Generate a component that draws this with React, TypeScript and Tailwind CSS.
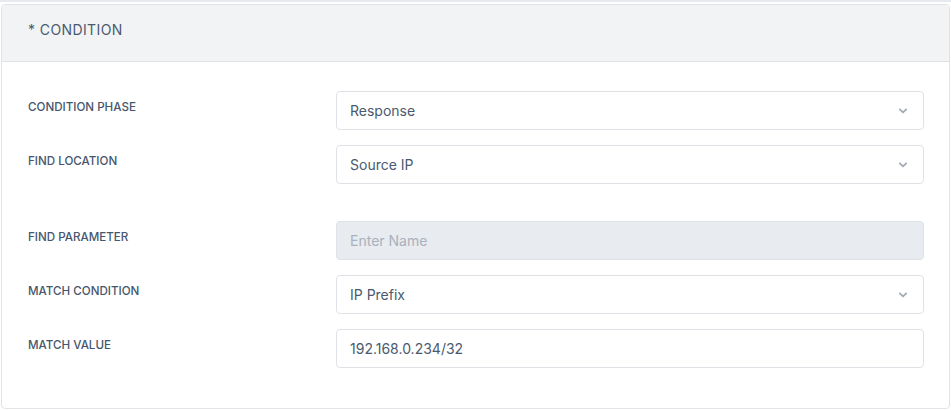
const font = { fontFamily: "Inter, 'Noto Sans', sans-serif" };

function Chevron() {
  return (
    <svg width="10" height="6" viewBox="0 0 10 6" className="shrink-0">
      <path d="M1.8 1.4 L5 4.4 L8.2 1.4" fill="none" stroke="#a3aab2" strokeWidth="1.8" strokeLinecap="round" strokeLinejoin="round" />
    </svg>
  );
}

function Row({
  label,
  children,
  className = "",
}: {
  label: string;
  children: React.ReactNode;
  className?: string;
}) {
  return (
    <div className={"flex items-start " + className}>
      <div className="w-[308px] shrink-0 pt-[8px] text-[11.6px] leading-4 font-medium uppercase text-[#46566c]">
        {label}
      </div>
      {children}
    </div>
  );
}

function Select({ value }: { value: string }) {
  return (
    <div className="flex-1 h-[39px] flex items-center justify-between rounded-[4px] border border-[#dee2e7] bg-white pl-[13px] pr-[15px] text-[14px] text-[#4a5a6e]">
      <span>{value}</span>
      <Chevron />
    </div>
  );
}

function TextField({ value, placeholder, disabled }: { value?: string; placeholder?: string; disabled?: boolean }) {
  return (
    <div
      className={
        "flex-1 h-[39px] flex items-center rounded-[4px] border border-[#dee2e7] pl-[13px] text-[14px] " +
        (disabled ? "bg-[#e8ebef] text-[#a8b1bc]" : "bg-white text-[#4a5a6e]")
      }
    >
      {value ?? placeholder}
    </div>
  );
}

export default function App() {
  return (
    <div className="w-[951px] h-[410px] bg-white" style={font}>
      <div className="h-[2px] bg-[#e6e9ed]" />
      <div className="mt-[2px] mx-[1px] rounded-[4px] border border-[#e0e4e8] bg-white">
        <div className="h-[57px] flex items-center pl-[26px] pb-[7px] bg-[#f1f3f4] border-b border-[#dfe3e7] rounded-t-[4px] text-[14px] tracking-[0.4px] text-[#4a5a70]">
          * CONDITION
        </div>
        <div className="pt-[29px] pb-[40px] pl-[26px] pr-[25px] flex flex-col">
          <Row label="Condition Phase" className="mb-[15px]">
            <Select value="Response" />
          </Row>
          <Row label="Find Location" className="mb-[37px]">
            <Select value="Source IP" />
          </Row>
          <Row label="Find Parameter" className="mb-[15px]">
            <TextField placeholder="Enter Name" disabled />
          </Row>
          <Row label="Match Condition" className="mb-[15px]">
            <Select value="IP Prefix" />
          </Row>
          <Row label="Match Value">
            <TextField value="192.168.0.234/32" />
          </Row>
        </div>
      </div>
    </div>
  );
}
